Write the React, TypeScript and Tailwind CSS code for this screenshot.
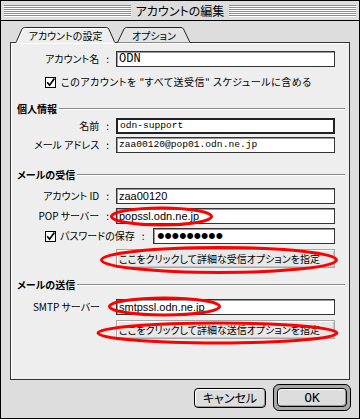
import type { ReactNode } from "react";

const Check = () => (
  <svg width="11" height="11" viewBox="0 0 11 11" className="shrink-0">
    <rect x="0.5" y="0.5" width="10" height="10" fill="#fff" stroke="#000" />
    <path d="M2.2 5.2 L4.6 8.2 L9.4 1.6" fill="none" stroke="#000" strokeWidth="1.7" />
  </svg>
);

const Field = ({
  label,
  children,
  thick,
  font,
}: {
  label: ReactNode;
  children: ReactNode;
  thick?: boolean;
  font: string;
}) => (
  <div className="flex h-[16px] items-center">
    <div className="flex w-[101px] justify-end">
      {label}
      <span className="ml-[7px] mr-[3px]">:</span>
    </div>
    <div
      className={`ml-[4px] flex h-full w-[219px] items-center bg-white pl-[2px] ${
        thick
          ? "border-2 border-[#222]"
          : "border border-[#333] shadow-[inset_1px_1px_0_#9a9a9a]"
      } ${font}`}
    >
      {children}
    </div>
  </div>
);

const Section = ({ title }: { title: string }) => (
  <div className="flex h-[12px] items-center pl-[6px] pr-[4px]">
    <span className="font-bold">{title}</span>
    <div className="ml-[2px] h-[2px] flex-1 border-t border-b border-t-[#8a8a8a] border-b-white" />
  </div>
);

const WideButton = ({ children }: { children: ReactNode }) => (
  <div className="ml-[105px] flex h-[19px] w-[219px] items-center border border-[#a6a6a6] bg-[#e8e8e8] pl-[2px] shadow-[inset_1px_1px_0_#fff,inset_-1px_-1px_0_#c6c6c6]">
    {children}
  </div>
);

const sans = "font-['Liberation_Sans',sans-serif] text-[11px]";
const mono = "font-['Liberation_Mono',monospace] text-[9.6px]";

export default function App() {
  return (
    <div className="relative flex h-[419px] w-[360px] flex-col border border-black bg-[#dddddd] font-['Noto_Sans_CJK_JP',sans-serif] text-[10px] leading-none text-black [font-feature-settings:'palt']">
      {/* title bar */}
      <div className="flex h-[20px] items-center border-b border-black bg-[#dddddd] px-[3px]">
        <div className="h-[12px] flex-1 bg-[repeating-linear-gradient(to_bottom,#8c8c8c_0px,#8c8c8c_1px,#ffffff_1px,#ffffff_2px)]" />
        <span className="px-[5px] text-[12px]">アカウントの編集</span>
        <div className="h-[12px] flex-1 bg-[repeating-linear-gradient(to_bottom,#8c8c8c_0px,#8c8c8c_1px,#ffffff_1px,#ffffff_2px)]" />
      </div>

      {/* tabs */}
      <div className="relative z-10 mx-[9px] mt-[5px] flex h-[17px] items-center pt-[2px]">
        <svg className="absolute inset-0" width="341" height="17" viewBox="0 0 341 17">
          <path
            d="M107.5 16.5 L114 3 Q115 1.5 116.5 1.5 L171 1.5 Q172.5 1.5 173.5 3 L180 16.5"
            fill="#e4e4e4"
            stroke="#222"
          />
          <path
            d="M6 16.5 L12 3 Q13 1.5 14.5 1.5 L96.5 1.5 Q98 1.5 98.8 3 L104.8 16.5"
            fill="#eeeeee"
            stroke="#222"
          />
          <rect x="6.5" y="15.5" width="98" height="1.5" fill="#eeeeee" />
          <path d="M7.8 16 L13.4 3.4 Q13.9 2.5 15 2.5 L96 2.5" fill="none" stroke="#fff" />
        </svg>
        <div className="relative ml-[6px] w-[99px] text-center">アカウントの設定</div>
        <div className="relative ml-[3px] w-[72px] text-center">オプション</div>
      </div>

      {/* panel */}
      <div className="mx-[9px] -mt-px flex h-[338px] flex-col border border-[#333] bg-[#eeeeee] pt-[8px] shadow-[inset_1px_1px_0_#fff]">
        <Field label="アカウント名" font="font-['Liberation_Mono',monospace] text-[12px]">
          ODN
        </Field>
        <div className="mt-[9px] flex h-[12px] items-center pl-[34px]">
          <Check />
          <span className="ml-[5px] tracking-[0.5px]">このアカウントを "すべて送受信" スケジュールに含める</span>
        </div>

        <div className="mt-[15px]">
          <Section title="個人情報" />
        </div>
        <div className="mt-[3px]">
          <Field label="名前" thick font={mono}>
            odn-support
          </Field>
        </div>
        <div className="mt-[3px]">
          <Field label="メール アドレス" font={mono}>
            zaa00120@pop01.odn.ne.jp
          </Field>
        </div>

        <div className="mt-[16px]">
          <Section title="メールの受信" />
        </div>
        <div className="mt-[7px]">
          <Field label="アカウント ID" font={sans}>
            zaa00120
          </Field>
        </div>
        <div className="mt-[4px]">
          <Field label="POP サーバー" font={sans}>
            popssl.odn.ne.jp
          </Field>
        </div>
        <div className="mt-[4px] flex h-[16px] items-center pl-[34px]">
          <Check />
          <span className="ml-[4px]">パスワードの保存</span>
          <span className="ml-[7px]">:</span>
          <div className="ml-auto mr-[14px] flex h-full w-[182px] items-center border border-[#333] bg-white pl-[3px] shadow-[inset_1px_1px_0_#9a9a9a]">
            <span className="font-['Liberation_Sans',sans-serif] text-[22px] tracking-[-0.4px]">•••••••••</span>
          </div>
        </div>
        <div className="mt-[5px]">
          <WideButton>ここをクリックして詳細な受信オプションを指定</WideButton>
        </div>

        <div className="mt-[11px]">
          <Section title="メールの送信" />
        </div>
        <div className="mt-[8px] flex h-[16px] items-center">
          <div className="flex w-[101px] justify-end pr-[12px]">SMTP サーバー</div>
          <div className={`ml-[4px] flex h-full w-[219px] items-center border border-[#333] bg-white pl-[2px] shadow-[inset_1px_1px_0_#9a9a9a] ${sans}`}>
            smtpssl.odn.ne.jp
          </div>
        </div>
        <div className="mt-[5px]">
          <WideButton>ここをクリックして詳細な送信オプションを指定</WideButton>
        </div>
      </div>

      {/* buttons */}
      <div className="mt-[4px] flex h-[27px] items-center justify-end gap-[7px] pr-[8px]">
        <button className="flex h-[20px] w-[72px] items-center justify-center rounded-[4px] border border-black bg-[#dddddd] text-[12px] shadow-[inset_1px_1px_0_#fff,inset_-1px_-1px_0_#999]">
          キャンセル
        </button>
        <div className="rounded-[6px] border border-black bg-[#a8a8a8] p-[3px]">
          <button className="flex h-[19px] w-[70px] items-center justify-center rounded-[4px] border border-black bg-[#dddddd] font-['DejaVu_Sans_Mono',monospace] text-[13px] shadow-[inset_1px_1px_0_#fff,inset_-1px_-1px_0_#999]">
            OK
          </button>
        </div>
      </div>

      {/* red annotation marks */}
      <svg
        className="pointer-events-none absolute left-[-1px] top-[-1px]"
        width="360"
        height="419"
        viewBox="0 0 360 419"
      >
        <g fill="none" stroke="#ff0000" strokeWidth="3">
          <ellipse cx="161.5" cy="216.5" rx="50" ry="8.5" />
          <ellipse cx="219" cy="260" rx="117.5" ry="12.5" />
          <ellipse cx="164.5" cy="306.5" rx="55" ry="8.5" />
          <ellipse cx="217.5" cy="333" rx="119.5" ry="10" />
        </g>
      </svg>
    </div>
  );
}
